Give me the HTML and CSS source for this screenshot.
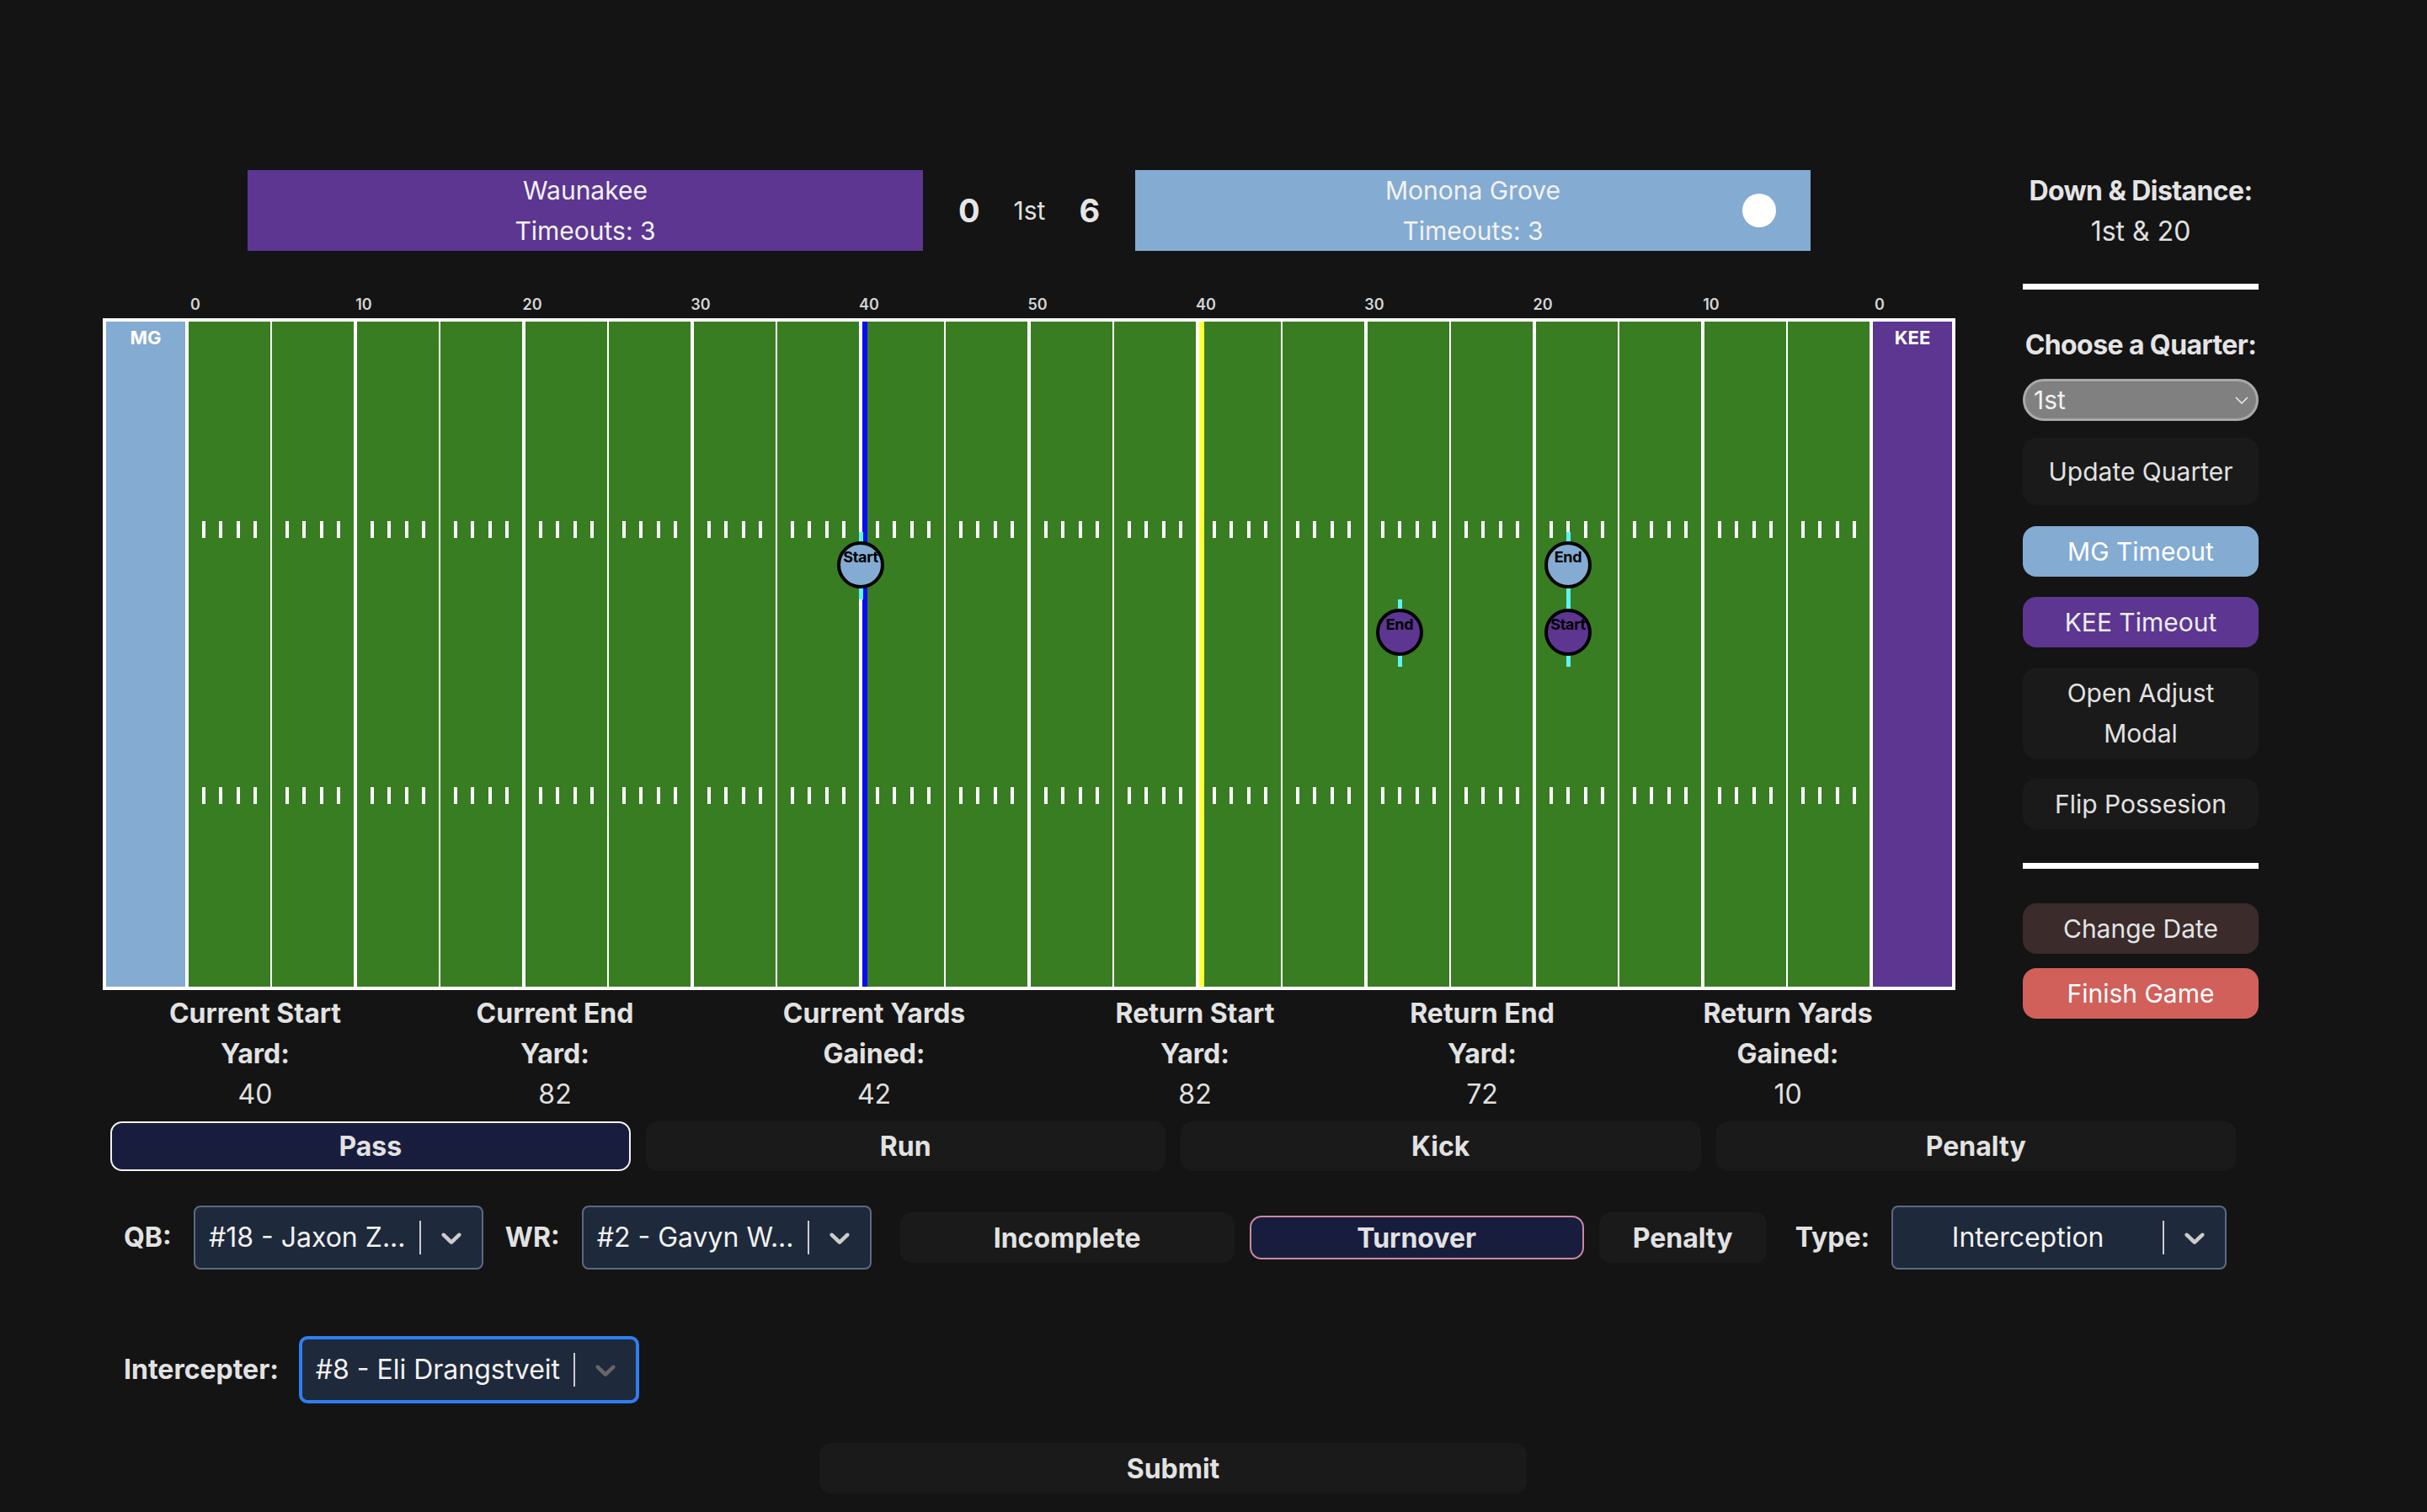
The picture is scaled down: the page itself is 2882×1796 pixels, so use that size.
FILE: index.html
```html
<!DOCTYPE html>
<html lang="en">
<head>
<meta charset="utf-8">
<title>Game Tracker</title>
<link rel="stylesheet" href="styles.css">
</head>
<body>
<div class="top">
  <div class="main">
    <div class="scoreboard">
      <div class="team team-kee">
        <div>Waunakee</div>
        <div>Timeouts: 3</div>
      </div>
      <div class="score">
        <span class="pts">0</span>
        <span class="qtr">1st</span>
        <span class="pts">6</span>
      </div>
      <div class="team team-mg">
        <div>Monona Grove</div>
        <div>Timeouts: 3</div>
        <span class="possession"></span>
      </div>
    </div>

    <div class="yard-labels">
      <span>0</span><span>10</span><span>20</span><span>30</span><span>40</span><span>50</span><span>40</span><span>30</span><span>20</span><span>10</span><span>0</span>
    </div>

    <div class="field">
      <div class="endzone ez-mg">MG</div>
      <div class="block"><div class="half"><div class="hashes"><i></i><i></i><i></i><i></i></div><div class="hashes"><i></i><i></i><i></i><i></i></div></div><div class="half"><div class="hashes"><i></i><i></i><i></i><i></i></div><div class="hashes"><i></i><i></i><i></i><i></i></div></div></div>
      <div class="block"><div class="half"><div class="hashes"><i></i><i></i><i></i><i></i></div><div class="hashes"><i></i><i></i><i></i><i></i></div></div><div class="half"><div class="hashes"><i></i><i></i><i></i><i></i></div><div class="hashes"><i></i><i></i><i></i><i></i></div></div></div>
      <div class="block"><div class="half"><div class="hashes"><i></i><i></i><i></i><i></i></div><div class="hashes"><i></i><i></i><i></i><i></i></div></div><div class="half"><div class="hashes"><i></i><i></i><i></i><i></i></div><div class="hashes"><i></i><i></i><i></i><i></i></div></div></div>
      <div class="block"><div class="half"><div class="hashes"><i></i><i></i><i></i><i></i></div><div class="hashes"><i></i><i></i><i></i><i></i></div></div><div class="half"><div class="hashes"><i></i><i></i><i></i><i></i></div><div class="hashes"><i></i><i></i><i></i><i></i></div></div></div>
      <div class="block"><div class="half"><div class="hashes"><i></i><i></i><i></i><i></i></div><div class="hashes"><i></i><i></i><i></i><i></i></div></div><div class="half"><div class="hashes"><i></i><i></i><i></i><i></i></div><div class="hashes"><i></i><i></i><i></i><i></i></div></div></div>
      <div class="block"><div class="half"><div class="hashes"><i></i><i></i><i></i><i></i></div><div class="hashes"><i></i><i></i><i></i><i></i></div></div><div class="half"><div class="hashes"><i></i><i></i><i></i><i></i></div><div class="hashes"><i></i><i></i><i></i><i></i></div></div></div>
      <div class="block"><div class="half"><div class="hashes"><i></i><i></i><i></i><i></i></div><div class="hashes"><i></i><i></i><i></i><i></i></div></div><div class="half"><div class="hashes"><i></i><i></i><i></i><i></i></div><div class="hashes"><i></i><i></i><i></i><i></i></div></div></div>
      <div class="block"><div class="half"><div class="hashes"><i></i><i></i><i></i><i></i></div><div class="hashes"><i></i><i></i><i></i><i></i></div></div><div class="half"><div class="hashes"><i></i><i></i><i></i><i></i></div><div class="hashes"><i></i><i></i><i></i><i></i></div></div></div>
      <div class="block"><div class="half"><div class="hashes"><i></i><i></i><i></i><i></i></div><div class="hashes"><i></i><i></i><i></i><i></i></div></div><div class="half"><div class="hashes"><i></i><i></i><i></i><i></i></div><div class="hashes"><i></i><i></i><i></i><i></i></div></div></div>
      <div class="block"><div class="half"><div class="hashes"><i></i><i></i><i></i><i></i></div><div class="hashes"><i></i><i></i><i></i><i></i></div></div><div class="half"><div class="hashes"><i></i><i></i><i></i><i></i></div><div class="hashes"><i></i><i></i><i></i><i></i></div></div></div>
      <div class="endzone ez-kee">KEE</div>

      <div class="line-los" style="left:898px"></div>
      <div class="line-first" style="left:1298px"></div>

      <div class="marker marker-mg" style="left:868px;top:250px"><span class="ball">Start</span></div>
      <div class="marker marker-mg" style="left:1708px;top:250px"><span class="ball">End</span></div>
      <div class="marker marker-kee" style="left:1508px;top:330px"><span class="ball">End</span></div>
      <div class="marker marker-kee" style="left:1708px;top:330px"><span class="ball">Start</span></div>
    </div>

    <div class="stats">
      <div class="stat"><div class="stat-label">Current Start<br>Yard:</div><div class="stat-value">40</div></div>
      <div class="stat"><div class="stat-label">Current End<br>Yard:</div><div class="stat-value">82</div></div>
      <div class="stat"><div class="stat-label">Current Yards<br>Gained:</div><div class="stat-value">42</div></div>
      <div class="stat"><div class="stat-label">Return Start<br>Yard:</div><div class="stat-value">82</div></div>
      <div class="stat"><div class="stat-label">Return End<br>Yard:</div><div class="stat-value">72</div></div>
      <div class="stat"><div class="stat-label">Return Yards<br>Gained:</div><div class="stat-value">10</div></div>
    </div>
  </div>

  <aside class="panel">
    <div class="panel-title">Down &amp; Distance:</div>
    <div class="panel-text">1st &amp; 20</div>
    <div class="rule rule-1"></div>
    <div class="panel-title panel-title-q">Choose a Quarter:</div>
    <div class="pill-select">
      <span>1st</span>
      <svg class="pill-chev" width="16" height="9" viewBox="0 0 16 9"><polyline points="1,1 8,8 15,1" fill="none" stroke="#e8e8e8" stroke-width="1.6"/></svg>
    </div>
    <button class="pbtn pbtn-tall">Update Quarter</button>
    <button class="pbtn pbtn-mg">MG Timeout</button>
    <button class="pbtn pbtn-kee">KEE Timeout</button>
    <button class="pbtn">Open Adjust Modal</button>
    <button class="pbtn">Flip Possesion</button>
    <div class="rule rule-2"></div>
    <button class="pbtn pbtn-date">Change Date</button>
    <button class="pbtn pbtn-finish">Finish Game</button>
  </aside>
</div>

<div class="bottom">
  <div class="tabs">
    <button class="tab tab-active">Pass</button>
    <button class="tab">Run</button>
    <button class="tab">Kick</button>
    <button class="tab">Penalty</button>
  </div>

  <div class="play-row">
    <span class="row-label">QB:</span>
    <div class="rs rs-player">
      <div class="rs-value">#18 - Jaxon Z...</div>
      <span class="rs-sep"></span>
      <span class="rs-ind"><svg width="40" height="40" viewBox="0 0 20 20"><path d="M4.516 7.548c0.436-0.446 1.043-0.481 1.576 0l3.908 3.747 3.908-3.747c0.533-0.481 1.141-0.446 1.574 0 0.436 0.445 0.408 1.197 0 1.615-0.406 0.418-4.695 4.502-4.695 4.502-0.217 0.223-0.502 0.335-0.787 0.335s-0.57-0.112-0.789-0.335c0 0-4.287-4.084-4.695-4.502s-0.436-1.17 0-1.615z"/></svg></span>
    </div>
    <span class="row-label">WR:</span>
    <div class="rs rs-player">
      <div class="rs-value">#2 - Gavyn W...</div>
      <span class="rs-sep"></span>
      <span class="rs-ind"><svg width="40" height="40" viewBox="0 0 20 20"><path d="M4.516 7.548c0.436-0.446 1.043-0.481 1.576 0l3.908 3.747 3.908-3.747c0.533-0.481 1.141-0.446 1.574 0 0.436 0.445 0.408 1.197 0 1.615-0.406 0.418-4.695 4.502-4.695 4.502-0.217 0.223-0.502 0.335-0.787 0.335s-0.57-0.112-0.789-0.335c0 0-4.287-4.084-4.695-4.502s-0.436-1.17 0-1.615z"/></svg></span>
    </div>
    <div class="opt-group">
      <button class="opt opt-wide">Incomplete</button>
      <button class="opt opt-wide opt-active">Turnover</button>
      <button class="opt opt-narrow">Penalty</button>
    </div>
    <span class="row-label">Type:</span>
    <div class="rs rs-type">
      <div class="rs-value">Interception</div>
      <span class="rs-sep"></span>
      <span class="rs-ind"><svg width="40" height="40" viewBox="0 0 20 20"><path d="M4.516 7.548c0.436-0.446 1.043-0.481 1.576 0l3.908 3.747 3.908-3.747c0.533-0.481 1.141-0.446 1.574 0 0.436 0.445 0.408 1.197 0 1.615-0.406 0.418-4.695 4.502-4.695 4.502-0.217 0.223-0.502 0.335-0.787 0.335s-0.57-0.112-0.789-0.335c0 0-4.287-4.084-4.695-4.502s-0.436-1.17 0-1.615z"/></svg></span>
    </div>
  </div>

  <div class="play-row play-row-2">
    <span class="row-label">Intercepter:</span>
    <div class="rs rs-int rs-focused">
      <div class="rs-value">#8 - Eli Drangstveit</div>
      <span class="rs-sep"></span>
      <span class="rs-ind"><svg width="40" height="40" viewBox="0 0 20 20"><path d="M4.516 7.548c0.436-0.446 1.043-0.481 1.576 0l3.908 3.747 3.908-3.747c0.533-0.481 1.141-0.446 1.574 0 0.436 0.445 0.408 1.197 0 1.615-0.406 0.418-4.695 4.502-4.695 4.502-0.217 0.223-0.502 0.335-0.787 0.335s-0.57-0.112-0.789-0.335c0 0-4.287-4.084-4.695-4.502s-0.436-1.17 0-1.615z"/></svg></span>
    </div>
  </div>

  <button class="submit">Submit</button>
</div>
</body>
</html>
```

FILE: styles.css
```css
html, body {
  margin: 0;
  padding: 0;
}

body {
  background: #141414;
  color: #e0e0e0;
  font-family: Inter, "Noto Sans", "Liberation Sans", sans-serif;
  font-size: 32px;
  line-height: 48px;
  width: 2882px;
  min-height: 1796px;
}

button {
  font-family: inherit;
  border: none;
  cursor: pointer;
  color: inherit;
  padding: 0;
  margin: 0;
}

/* ---------- top area ---------- */
.top {
  display: flex;
  align-items: flex-start;
  gap: 80px;
  padding-left: 122px;
}

.main {
  width: 2200px;
  flex: none;
}

/* scoreboard */
.scoreboard {
  display: flex;
  justify-content: center;
  align-items: center;
  margin-top: 202px;
}

.team {
  position: relative;
  width: 802px;
  height: 96px;
  text-align: center;
  font-size: 30px;
  line-height: 48px;
  color: #f2f2f2;
}

.team-kee { background: #5c3691; }
.team-mg { background: #84abd2; }

.possession {
  position: absolute;
  right: 41px;
  top: 28px;
  width: 40px;
  height: 40px;
  border-radius: 50%;
  background: #ffffff;
}

.score {
  width: 252px;
  display: flex;
  justify-content: center;
  align-items: center;
  gap: 40px;
}

.pts {
  font-size: 38px;
  font-weight: 700;
  color: #e6e6e6;
}

.qtr {
  font-size: 30px;
  color: #e0e0e0;
}

/* yard labels */
.yard-labels {
  display: flex;
  margin-top: 53px;
  padding-left: 10px;
  height: 22px;
  font-size: 18px;
  line-height: 22px;
  font-weight: 600;
  color: #d4d4d4;
}

.yard-labels span {
  flex: 0 0 200px;
  text-align: center;
}

/* field */
.field {
  position: relative;
  margin-top: 5px;
  display: flex;
  gap: 4px;
  height: 790px;
  border: 4px solid #ffffff;
  background: #ffffff;
}

.endzone {
  flex: 0 0 94px;
  text-align: center;
  font-size: 22px;
  line-height: 26px;
  font-weight: 700;
  color: #ffffff;
  padding-top: 6px;
  box-sizing: border-box;
}

.ez-mg { background: #84abd2; }
.ez-kee { background: #5c3691; }

.block {
  flex: 0 0 196px;
  display: flex;
  gap: 2px;
}

.half {
  flex: 1;
  background: #387d22;
}

.hashes {
  display: flex;
  justify-content: space-evenly;
  height: 20px;
  margin-top: 237px;
}

.hashes + .hashes {
  margin-top: 296px;
}

.hashes i {
  display: block;
  width: 4px;
  height: 20px;
  background: #ffffff;
}

.line-los,
.line-first {
  position: absolute;
  top: 0;
  bottom: 0;
  width: 6px;
}

.line-los { background: #0c0cf2; }
.line-first { background: #ffff3a; }

.marker {
  position: absolute;
  width: 56px;
  height: 80px;
  display: flex;
  justify-content: center;
}

.marker::before {
  content: "";
  position: absolute;
  left: 26px;
  top: 0;
  bottom: 0;
  width: 5px;
  background: #5ff2f2;
}

.ball {
  position: relative;
  display: block;
  margin-top: 11px;
  width: 56px;
  height: 56px;
  box-sizing: border-box;
  border: 4px solid #000000;
  border-radius: 50%;
  padding-top: 6px;
  text-align: center;
  font-size: 18px;
  line-height: 18px;
  font-weight: 700;
  color: #000000;
  letter-spacing: -0.3px;
  white-space: nowrap;
}

.marker-mg .ball { background: #84abd2; }
.marker-kee .ball { background: #5c3691; }

/* stats */
.stats {
  display: grid;
  grid-template-columns: 362px 350px 408px 354px 328px 398px;
  margin-top: 4px;
  text-align: center;
}

.stat-label {
  font-weight: 700;
  color: #e2e2e2;
}

.stat-value {
  color: #e0e0e0;
}

/* side panel */
.panel {
  width: 280px;
  flex: none;
  display: flex;
  flex-direction: column;
  margin-top: 203px;
  text-align: center;
}

.panel-title {
  font-weight: 700;
  color: #e4e4e4;
  white-space: nowrap;
  letter-spacing: -0.6px;
}

.panel-title-q {
  margin-top: 42px;
}

.panel-text {
  color: #e0e0e0;
}

.rule {
  height: 7px;
  background: #ffffff;
}

.rule-1 { margin-top: 38px; }
.rule-2 { margin-top: 40px; }

.pill-select {
  margin-top: 16px;
  height: 50px;
  box-sizing: border-box;
  border: 3px solid #a9a9a9;
  border-radius: 25px;
  background: #808080;
  display: flex;
  align-items: center;
  justify-content: space-between;
  padding: 0 9px 0 10px;
  font-size: 30px;
  line-height: 44px;
  color: #f2f2f2;
}

.pbtn {
  margin-top: 24px;
  border-radius: 16px;
  background: #1a1a1a;
  color: #e2e2e2;
  font-size: 30px;
  line-height: 48px;
  padding: 6px 20px;
  text-align: center;
}

.pbtn-tall {
  margin-top: 20px;
  padding: 16px 20px;
}

.pbtn-mg {
  margin-top: 25px;
  background: #84abd2;
  color: #ffffff;
}

.pbtn-kee {
  background: #5c3691;
  color: #ececec;
}

.pbtn-date {
  margin-top: 41px;
  background: #3b2b2b;
  color: #e4e4e4;
}

.pbtn-finish {
  margin-top: 17px;
  background: #d1605a;
  color: #ffffff;
}

/* ---------- bottom area ---------- */
.bottom {
  margin-left: 131px;
  width: 2524px;
  margin-top: 8px;
}

.tabs {
  display: grid;
  grid-template-columns: repeat(4, 1fr);
  gap: 18px;
}

.tab {
  height: 59px;
  box-sizing: border-box;
  border: 2px solid transparent;
  border-radius: 14px;
  background: #1a1a1a;
  color: #e2e2e2;
  font-size: 32px;
  font-weight: 700;
}

.tab-active {
  background: #181d3d;
  border-color: #f2f2f2;
}

.play-row {
  display: flex;
  align-items: center;
  gap: 26px;
  padding-left: 16px;
  margin-top: 41px;
  height: 76px;
}

.play-row-2 {
  margin-top: 81px;
}

.row-label {
  font-weight: 700;
  color: #e2e2e2;
  white-space: nowrap;
}

.rs {
  display: flex;
  align-items: center;
  height: 76px;
  box-sizing: border-box;
  background: #1e293b;
  border: 2px solid #5b6a82;
  border-radius: 8px;
  flex: none;
}

.rs-player { width: 344px; }
.rs-type { width: 398px; }
.rs-int { width: 400px; }

.rs-focused {
  border-color: #2f7ef0;
  box-shadow: 0 0 0 2px #2f7ef0;
}

.rs-value {
  flex: 1;
  min-width: 0;
  padding: 0 12px;
  text-align: center;
  white-space: nowrap;
  overflow: hidden;
  color: #f2f2f2;
  font-size: 32px;
}

.rs-sep {
  width: 2px;
  height: 40px;
  background: #cccccc;
  flex: none;
}

.rs-ind {
  width: 72px;
  display: flex;
  justify-content: center;
  align-items: center;
  flex: none;
  fill: #cccccc;
}

.rs-focused .rs-ind {
  fill: #666666;
}

.opt-group {
  display: flex;
  align-items: center;
  gap: 18px;
  margin: 0 8px;
}

.opt {
  height: 60px;
  border-radius: 14px;
  background: #1a1a1a;
  color: #e2e2e2;
  font-size: 32px;
  font-weight: 700;
  box-sizing: border-box;
}

.opt-wide { width: 397px; }
.opt-narrow { width: 199px; }

.opt-active {
  height: 52px;
  background: #181d3d;
  border: 2px solid #c98aa0;
}

.submit {
  display: block;
  width: 840px;
  height: 60px;
  margin: 49px auto 0;
  border-radius: 14px;
  background: #1a1a1a;
  color: #e2e2e2;
  font-size: 32px;
  font-weight: 700;
}
```
